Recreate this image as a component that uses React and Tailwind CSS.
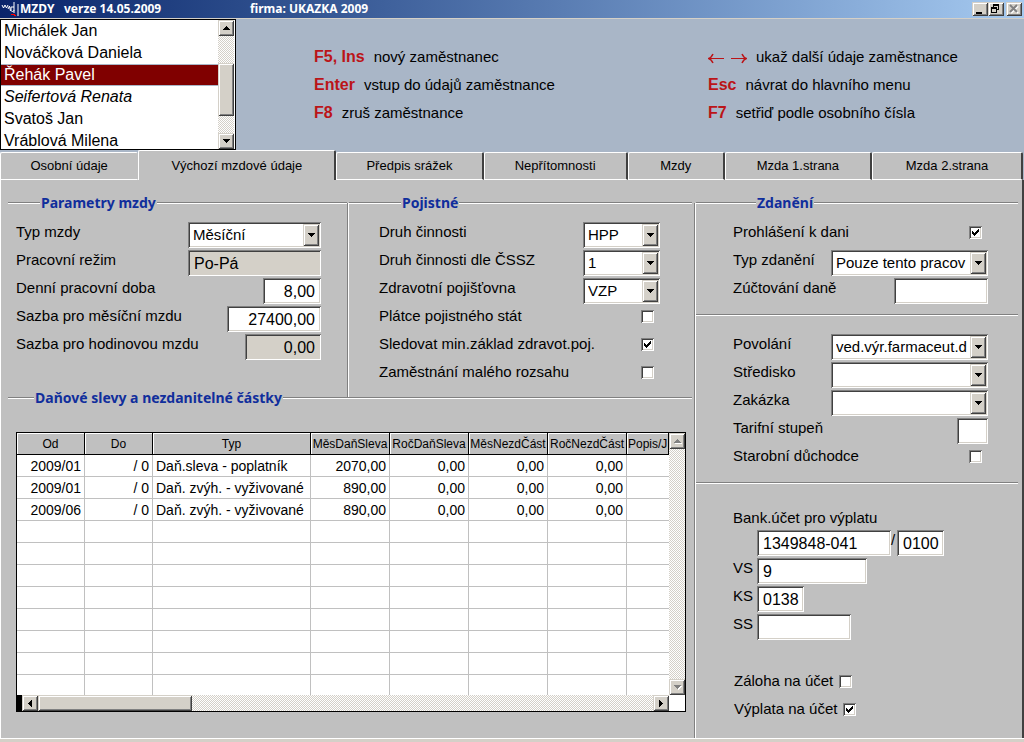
import { useState } from 'react';
import clsx from 'clsx';

const employees = [
  { name: 'Michálek Jan' },
  { name: 'Nováčková Daniela' },
  { name: 'Řehák Pavel' },
  { name: 'Seifertová Renata', italic: true },
  { name: 'Svatoš Jan' },
  { name: 'Vráblová Milena' },
];

const tabs = [
  { label: 'Osobní údaje', grow: 'flex-[139_1_0%]' },
  { label: 'Výchozí mzdové údaje', grow: 'flex-[199_1_0%]' },
  { label: 'Předpis srážek', grow: 'flex-[147_1_0%]' },
  { label: 'Nepřítomnosti', grow: 'flex-[144_1_0%]' },
  { label: 'Mzdy', grow: 'flex-[96_1_0%]' },
  { label: 'Mzda 1.strana', grow: 'flex-[147_1_0%]' },
  { label: 'Mzda 2.strana', grow: 'flex-[151_1_0%]' },
];

const columns = ['Od', 'Do', 'Typ', 'MěsDaňSleva', 'RočDaňSleva', 'MěsNezdČást', 'RočNezdČást', 'Popis/J'];

const allowances = [
  ['2009/01', '/ 0', 'Daň.sleva - poplatník', '2070,00', '0,00', '0,00', '0,00', ''],
  ['2009/01', '/ 0', 'Daň. zvýh. - vyživované', '890,00', '0,00', '0,00', '0,00', ''],
  ['2009/06', '/ 0', 'Daň. zvýh. - vyživované', '890,00', '0,00', '0,00', '0,00', ''],
];

const tableRows = [...allowances, ...Array.from({ length: 8 }, () => Array(8).fill(''))];

const sunken =
  'shadow-[inset_1px_1px_0_#808080,inset_-1px_-1px_0_#fff,inset_2px_2px_0_#404040,inset_-2px_-2px_0_#d4d0c8]';
const raised =
  'bg-[#d4d0c8] shadow-[inset_1px_1px_0_#d4d0c8,inset_-1px_-1px_0_#404040,inset_2px_2px_0_#fff,inset_-2px_-2px_0_#808080]';
const track = 'bg-[repeating-conic-gradient(#fff_0_25%,#d4d0c8_0_50%)] bg-[length:2px_2px]';

const arrowPaths = {
  up: 'M3 0h1v1h1v1h1v1h1v1H0V3h1V2h1V1h1z',
  down: 'M0 0h7v1H6v1H5v1H4v1H3V3H2V2H1V1H0z',
  left: 'M4 0v7H3V6H2V5H1V4H0V3h1V2h1V1h1V0z',
  right: 'M0 0v7h1V6h1V5h1V4h1V3H3V2H2V1H1V0z',
};

function Arrow({ dir, disabled }) {
  const vertical = dir === 'up' || dir === 'down';
  return (
    <svg
      width={vertical ? 7 : 4}
      height={vertical ? 4 : 7}
      viewBox={vertical ? '0 0 7 4' : '0 0 4 7'}
      className="overflow-visible"
      shapeRendering="crispEdges"
      aria-hidden="true"
    >
      {disabled && <path d={arrowPaths[dir]} fill="#fff" transform="translate(1 1)" />}
      <path d={arrowPaths[dir]} fill={disabled ? '#808080' : '#000'} />
    </svg>
  );
}

function ScrollButton({ dir, disabled, label }) {
  return (
    <button type="button" aria-label={label} className={clsx('flex h-4 w-4 shrink-0 items-center justify-center', raised)}>
      <Arrow dir={dir} disabled={disabled} />
    </button>
  );
}

function TextField({ label, value = '', width, right, readOnly, id }) {
  return (
    <input
      id={id}
      aria-label={label}
      type="text"
      defaultValue={value}
      readOnly={readOnly}
      className={clsx(
        'h-[26px] shrink-0 pt-1 pb-0.5 pl-1.5 text-base outline-none',
        sunken,
        width,
        right ? 'pr-1.5 text-right' : 'pr-0.5',
        readOnly ? 'bg-[#d4d0c8]' : 'bg-white'
      )}
    />
  );
}

function SelectField({ value = '', width, id }) {
  return (
    <div className={clsx('relative h-[26px] shrink-0', width)}>
      <select
        id={id}
        defaultValue={value}
        className={clsx('h-full w-full appearance-none bg-white pt-0.5 pr-4 pb-0.5 pl-[5px] outline-none', sunken)}
      >
        <option value={value}>{value}</option>
      </select>
      <span
        className={clsx(
          'pointer-events-none absolute top-0.5 right-0.5 bottom-0.5 flex w-4 items-center justify-center',
          raised
        )}
      >
        <Arrow dir="down" />
      </span>
    </div>
  );
}

function CheckField({ checked, id }) {
  return (
    <span className="relative flex h-[13px] w-[13px] shrink-0">
      <input
        id={id}
        type="checkbox"
        defaultChecked={checked}
        className={clsx('peer h-[13px] w-[13px] appearance-none bg-white', sunken)}
      />
      <svg
        viewBox="0 0 13 13"
        className="pointer-events-none absolute inset-0 hidden peer-checked:block"
        shapeRendering="crispEdges"
        aria-hidden="true"
      >
        <path d="M3 5h1v1h1v1h1V6h1V5h1V4h1V3h1v3H9v1H8v1H7v1H6v1H5V9H4V8H3z" />
      </svg>
    </span>
  );
}

// One labelled line of the form, the control sits at the right edge
function Row({ label, id, children }) {
  return (
    <div className="flex h-[26px] items-start justify-between">
      <label htmlFor={id} className="whitespace-nowrap leading-5">
        {label}
      </label>
      {children}
    </div>
  );
}

function CheckRow({ label, id, checked }) {
  return (
    <Row label={label} id={id}>
      <span className="mr-1.5 flex h-5 items-center">
        <CheckField id={id} checked={checked} />
      </span>
    </Row>
  );
}

function Groove({ className }) {
  return <div className={clsx('h-0.5 border-t border-b border-t-[#808080] border-b-white', className)} />;
}

// The legend is centred on the top edge of its section
function Legend({ children, lead }) {
  return (
    <div className="-mt-2.5 flex h-5 items-center">
      <Groove className={lead} />
      <h2 className="px-px font-['Noto_Sans',sans-serif] text-sm leading-5 font-bold whitespace-nowrap text-[#102e9c]">
        {children}
      </h2>
      <Groove className="flex-1" />
    </div>
  );
}

function TitleBar() {
  return (
    <header className="flex h-[19px] items-center border-b border-[#d4d0c8] bg-linear-to-r from-[#0a246a] to-[#a6caf0] font-['Noto_Sans',sans-serif] text-xs leading-4 font-bold text-white">
      <svg width="20" height="16" viewBox="0 0 20 16" className="shrink-0" fill="none" aria-hidden="true">
        <path d="M2 4l1.500 3L5 4l1.500 3L8 4M8 8l1.500-3 1 5M11 9V6h3M14 1v11M11 9c0 2 3 2 3 0M18 3v12" stroke="#fff" />
        <path d="M11 13.500h4M14 14.500h2" stroke="#f00" />
      </svg>
      <span className="w-11">MZDY</span>
      <span className="w-[186px]">verze 14.05.2009</span>
      <h1 className="flex-1">firma: UKAZKA 2009</h1>
      <div className="flex pr-0.5">
        <button type="button" aria-label="Minimalizovat" className={clsx('h-3.5 w-4', raised)}>
          <svg width="16" height="14" viewBox="0 0 16 14" shapeRendering="crispEdges">
            <path d="M4 10h6v2H4z" />
          </svg>
        </button>
        <button type="button" aria-label="Obnovit" className={clsx('h-3.5 w-4', raised)}>
          <svg width="16" height="14" viewBox="0 0 16 14" shapeRendering="crispEdges">
            <path d="M5 2h6v6H9V7h1V4H6v1H5zM3 5h6v6H3zM4 7v3h4V7z" fillRule="evenodd" />
          </svg>
        </button>
        <button type="button" aria-label="Zavřít" className={clsx('ml-0.5 h-3.5 w-4', raised)}>
          <svg width="16" height="14" viewBox="0 0 16 14" fill="none" strokeWidth="2">
            <path d="M5 4l7 7M12 4l-7 7" stroke="#fff" />
            <path d="M4 3l7 7M11 3l-7 7" stroke="#808080" />
          </svg>
        </button>
      </div>
    </header>
  );
}

function EmployeeList() {
  const [selected, setSelected] = useState('Řehák Pavel');

  return (
    <div className="flex h-[131px] w-[236px] shrink-0 border border-black bg-white text-base">
      <ul className="flex-1 overflow-hidden">
        {employees.map((employee) => (
          <li key={employee.name}>
            <button
              type="button"
              onClick={() => setSelected(employee.name)}
              className={clsx(
                'block h-[22px] w-full border-y pl-[3px] text-left leading-5',
                employee.italic && 'italic',
                selected === employee.name ? 'border-[#a9b6c7] bg-[#800000] text-white' : 'border-white'
              )}
            >
              {employee.name}
            </button>
          </li>
        ))}
      </ul>
      <div className={clsx('mr-px flex w-4 flex-col', track)}>
        <ScrollButton dir="up" label="Nahoru" />
        <div className="flex-1" />
        <div className={clsx('h-[53px]', raised)} />
        <div className="h-[17px]" />
        <ScrollButton dir="down" label="Dolů" />
      </div>
    </div>
  );
}

function Hint({ keys, children }) {
  return (
    <p className="flex h-5 gap-[9px] whitespace-nowrap">
      <kbd className="font-['Liberation_Sans',Arial,sans-serif] text-base leading-5 font-bold text-[#bb1418]">{keys}</kbd>
      <span>{children}</span>
    </p>
  );
}

function Hints() {
  return (
    <div className="flex flex-1 pt-7 pl-[78px] leading-5">
      <div className="flex flex-1 flex-col gap-2">
        <Hint keys="F5, Ins">nový zaměstnanec</Hint>
        <Hint keys="Enter">vstup do údajů zaměstnance</Hint>
        <Hint keys="F8">zruš zaměstnance</Hint>
      </div>
      <div className="flex w-[316px] flex-col gap-2">
        <Hint
          keys={
            <svg width="39" height="20" viewBox="0 0 39 20" fill="none" stroke="#bb1418" aria-label="Šipky">
              <path d="M0 11.500h16M23 11.500h16" />
              <path d="M5 7c-1 2-2 4-4.500 4.500c2.500 .5 3.500 2.500 4.500 4.500M34 7c1 2 2 4 4.500 4.500c-2.500 .5-3.500 2.500-4.500 4.500" strokeWidth="1.5" />
            </svg>
          }
        >
          ukaž další údaje zaměstnance
        </Hint>
        <Hint keys="Esc">návrat do hlavního menu</Hint>
        <Hint keys="F7">setřiď podle osobního čísla</Hint>
      </div>
    </div>
  );
}

function TabBar() {
  const [active, setActive] = useState(1);

  return (
    <div role="tablist" className="flex h-[30px] items-end pr-px text-[13px]">
      {tabs.map((tab, i) => (
        <button
          key={tab.label}
          type="button"
          role="tab"
          aria-selected={i === active}
          onClick={() => setActive(i)}
          className={clsx(
            'rounded-t-[2px] border-t border-l border-white bg-[#c0c0c0] whitespace-nowrap',
            tab.grow,
            i === active ? 'h-[30px]' : 'h-7 border-b',
            i === active - 1 ? 'border-r border-r-[#c0c0c0]' : 'border-r-2 border-r-[#404040]'
          )}
        >
          {tab.label}
        </button>
      ))}
    </div>
  );
}

function AllowanceTable() {
  return (
    <div className="mr-2 ml-[15px] border border-black bg-white">
      <div className="flex h-[262px]">
        <div className="flex-1 overflow-hidden">
          <table className="w-full table-fixed border-separate border-spacing-0 text-sm">
            <colgroup>
              <col className="w-[68px]" />
              <col className="w-[68px]" />
              <col className="w-[158px]" />
              <col className="w-[79px]" />
              <col className="w-[79px]" />
              <col className="w-[79px]" />
              <col className="w-[79px]" />
              <col />
            </colgroup>
            <thead>
              <tr>
                {columns.map((name, i) => (
                  <th
                    key={name}
                    className={clsx(
                      'h-[22px] overflow-hidden border-r border-b border-black bg-[#c0c0c0] p-0 text-xs font-normal whitespace-nowrap shadow-[inset_1px_1px_0_#fff]',
                      i === 7 && 'pl-px text-left'
                    )}
                  >
                    {name}
                  </th>
                ))}
              </tr>
            </thead>
            <tbody>
              {tableRows.map((cells, r) => (
                <tr key={r}>
                  {cells.map((cell, c) => (
                    <td
                      key={c}
                      className={clsx(
                        'h-[22px] overflow-hidden border-b border-[#c0c0c0] py-0 leading-5 whitespace-nowrap',
                        c < 7 && 'border-r',
                        c === 2 ? 'pr-0 pl-[3px] text-left' : 'pr-[3px] pl-0 text-right'
                      )}
                    >
                      {cell}
                    </td>
                  ))}
                </tr>
              ))}
            </tbody>
          </table>
        </div>
        <div className={clsx('flex w-4 flex-col justify-between', track)}>
          <ScrollButton dir="up" disabled label="Nahoru" />
          <ScrollButton dir="down" disabled label="Dolů" />
        </div>
      </div>
      <div className="flex h-4">
        <div className="w-[5px] bg-black" />
        <div className={clsx('flex flex-1', track)}>
          <ScrollButton dir="left" label="Vlevo" />
          <div className={clsx('w-[154px]', raised)} />
          <div className="flex-1" />
          <ScrollButton dir="right" label="Vpravo" />
        </div>
        <div className="w-4" />
      </div>
    </div>
  );
}

function WageParams() {
  return (
    <section className="flex w-[340px] flex-col border-r border-[#808080]">
      <Legend lead="w-8">Parametry mzdy</Legend>
      <div className="flex flex-col gap-0.5 pt-[9px] pr-[26px] pl-2">
        <Row label="Typ mzdy" id="typ-mzdy">
          <SelectField id="typ-mzdy" value="Měsíční" width="w-[133px]" />
        </Row>
        <Row label="Pracovní režim" id="rezim">
          <TextField id="rezim" value="Po-Pá" width="w-[133px]" readOnly />
        </Row>
        <Row label="Denní pracovní doba" id="doba">
          <TextField id="doba" value="8,00" width="w-[58px]" right />
        </Row>
        <Row label="Sazba pro měsíční mzdu" id="sazba-mes">
          <TextField id="sazba-mes" value="27400,00" width="w-[94px]" right />
        </Row>
        <Row label="Sazba pro hodinovou mzdu" id="sazba-hod">
          <TextField id="sazba-hod" value="0,00" width="w-[76px]" right readOnly />
        </Row>
      </div>
    </section>
  );
}

function Insurance() {
  return (
    <section className="flex flex-1 flex-col border-l border-white">
      <Legend lead="w-[52px]">Pojistné</Legend>
      <div className="flex flex-col gap-0.5 pt-[9px] pr-8 pb-2.5 pl-[30px]">
        <Row label="Druh činnosti" id="cinnost">
          <SelectField id="cinnost" value="HPP" width="w-[77px]" />
        </Row>
        <Row label="Druh činnosti dle ČSSZ" id="cssz">
          <SelectField id="cssz" value="1" width="w-[77px]" />
        </Row>
        <Row label="Zdravotní pojišťovna" id="pojistovna">
          <SelectField id="pojistovna" value="VZP" width="w-[77px]" />
        </Row>
        <CheckRow label="Plátce pojistného stát" id="platce" />
        <CheckRow label="Sledovat min.základ zdravot.poj." id="minzaklad" checked />
        <CheckRow label="Zaměstnání malého rozsahu" id="rozsah" />
      </div>
    </section>
  );
}

function TaxColumn() {
  return (
    <section className="flex w-[323px] shrink-0 flex-col border-l border-white">
      <Legend lead="w-[60px]">Zdanění</Legend>
      <div className="flex flex-col gap-0.5 pt-[9px] pr-[30px] pb-2.5 pl-[37px]">
        <CheckRow label="Prohlášení k dani" id="prohlaseni" checked />
        <Row label="Typ zdanění" id="typ-zdaneni">
          <SelectField id="typ-zdaneni" value="Pouze tento pracov" width="w-[157px]" />
        </Row>
        <Row label="Zúčtování daně" id="zuctovani">
          <TextField id="zuctovani" width="w-[94px]" />
        </Row>
      </div>
      <Groove />
      <div className="flex flex-col gap-0.5 pt-[18px] pr-[30px] pb-2.5 pl-[37px]">
        <Row label="Povolání" id="povolani">
          <SelectField id="povolani" value="ved.výr.farmaceut.d" width="w-[157px]" />
        </Row>
        <Row label="Středisko" id="stredisko">
          <SelectField id="stredisko" width="w-[157px]" />
        </Row>
        <Row label="Zakázka" id="zakazka">
          <SelectField id="zakazka" width="w-[157px]" />
        </Row>
        <Row label="Tarifní stupeň" id="stupen">
          <TextField id="stupen" width="w-[31px]" />
        </Row>
        <CheckRow label="Starobní důchodce" id="duchodce" />
      </div>
      <Groove />
      <div className="flex flex-col pt-6 pl-[37px] leading-5">
        <label htmlFor="ucet">Bank.účet pro výplatu</label>
        <div className="mt-0.5 flex flex-col gap-0.5">
          <div className="flex pl-6">
            <TextField id="ucet" value="1349848-041" width="w-[134px]" />
            <span className="w-1.5">/</span>
            <TextField label="Kód banky" value="0100" width="w-[47px]" />
          </div>
          <div className="flex">
            <label htmlFor="vs" className="w-6">VS</label>
            <TextField id="vs" value="9" width="w-[110px]" />
          </div>
          <div className="flex">
            <label htmlFor="ks" className="w-6">KS</label>
            <TextField id="ks" value="0138" width="w-[47px]" />
          </div>
          <div className="flex">
            <label htmlFor="ss" className="w-6">SS</label>
            <TextField id="ss" width="w-[94px]" />
          </div>
        </div>
        <div className="flex flex-col gap-2 pt-[31px] pl-px">
          <div className="flex items-center gap-1.5">
            <label htmlFor="zaloha">Záloha na účet</label>
            <CheckField id="zaloha" />
          </div>
          <div className="flex items-center gap-1.5">
            <label htmlFor="vyplata">Výplata na účet</label>
            <CheckField id="vyplata" checked />
          </div>
        </div>
      </div>
    </section>
  );
}

export default function App() {
  return (
    <div className="flex min-h-screen flex-col bg-[#a9b6c7] font-['Liberation_Sans',Arial,sans-serif] text-[15px] text-black">
      <TitleBar />
      <div className="flex">
        <EmployeeList />
        <Hints />
      </div>
      <TabBar />
      <main className="flex flex-1 border-r-2 border-l border-r-[#404040] border-l-white bg-[#c0c0c0] pt-[23px] pr-1">
        <div className="flex flex-1 flex-col border-r border-[#808080]">
          <div className="flex pr-0.5 pl-[7px]">
            <WageParams />
            <Insurance />
          </div>
          <section className="flex flex-col">
            <div className="pr-0.5 pl-[7px]">
              <Legend lead="w-[26px]">Daňové slevy a nezdanitelné částky</Legend>
            </div>
            <div className="pt-6">
              <AllowanceTable />
            </div>
          </section>
        </div>
        <TaxColumn />
      </main>
      <footer className="h-1 border-t border-white bg-[#d4d0c8]" />
    </div>
  );
}
